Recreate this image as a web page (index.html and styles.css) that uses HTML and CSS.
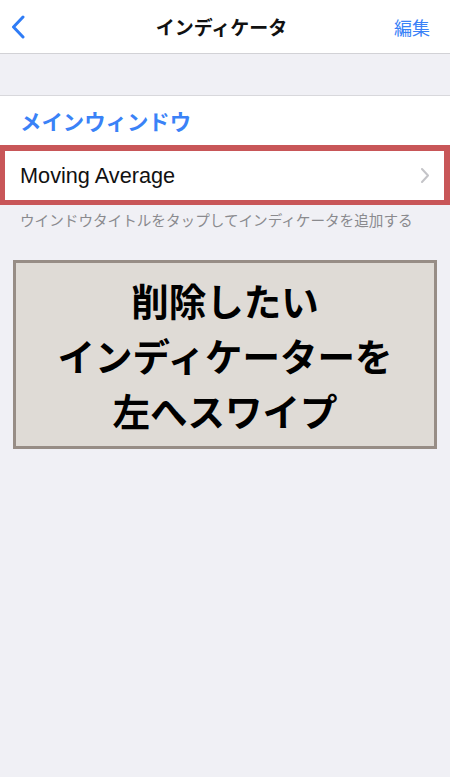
FILE: index.html
```html
<!DOCTYPE html>
<html lang="ja">

<head>
    <meta charset="UTF-8">
    <meta name="viewport" content="width=device-width, initial-scale=1.0">
    <title>インディケータ</title>
    <link rel="stylesheet" href="styles.css">
</head>

<body>
    <div class="nav">
        <svg class="back" width="14" height="24" viewBox="0 0 14 24">
            <path d="M12 2 L2.5 12 L12 22" fill="none" stroke="#2f7cf6" stroke-width="3" stroke-linecap="round" stroke-linejoin="round"/>
        </svg>
        <h1 class="title">インディケータ</h1>
        <span class="edit">編集</span>
    </div>
    <div class="spacer"></div>
    <div class="section">
        <div class="section-header">メインウィンドウ</div>
        <div class="row">
            <span class="row-label">Moving Average</span>
            <svg class="chevron" width="8" height="15" viewBox="0 0 8 15">
                <path d="M1 1 L7 7.5 L1 14" fill="none" stroke="#c4c4c8" stroke-width="2" stroke-linecap="round" stroke-linejoin="round"/>
            </svg>
        </div>
    </div>
    <p class="footer">ウインドウタイトルをタップしてインディケータを追加する</p>
    <div class="note">
        <p>削除したい<br>インディケーターを<br>左へスワイプ</p>
    </div>
</body>

</html>
```

FILE: styles.css
```css
body {
    font-family: "Noto Sans CJK JP", "Liberation Sans", sans-serif;
    background-color: #f0f0f5;
    margin: 0;
    padding: 0;
    width: 450px;
    height: 777px;
}

.nav {
    height: 53px;
    background-color: #fff;
    border-bottom: 1px solid #d2d2d6;
    display: flex;
    align-items: center;
    justify-content: space-between;
    padding: 0 20px 0 11px;
}

.back {
    display: block;
}

.title {
    margin: 0;
    font-size: 19px;
    font-weight: bold;
    color: #111;
    padding-left: 24px;
}

.edit {
    font-size: 18px;
    color: #3a82f7;
}

.spacer {
    height: 41px;
    border-bottom: 1px solid #d8d8dc;
}

.section {
    background-color: #fff;
}

.section-header {
    height: 49px;
    display: flex;
    align-items: center;
    padding-left: 20px;
    font-size: 21.4px;
    font-weight: bold;
    color: #3a82f7;
}

.row {
    height: 49px;
    border: 5px solid #c85658;
    border-top-width: 6px;
    border-right-width: 6px;
    display: flex;
    align-items: center;
    justify-content: space-between;
    padding: 0 15px;
}

.row-label {
    font-family: "Liberation Sans", "Noto Sans CJK JP", sans-serif;
    font-size: 21.7px;
    color: #111;
}

.chevron {
    display: block;
}

.footer {
    margin: 0;
    padding: 4px 20px 0;
    font-size: 14.6px;
    color: #8a8a8e;
    line-height: 22px;
    white-space: nowrap;
}

.note {
    margin: 29px 13px 0;
    height: 183px;
    border: 3px solid #978d86;
    background-color: #dfdbd6;
    display: flex;
    align-items: center;
    justify-content: center;
}

.note p {
    margin: 0;
    text-align: center;
    font-size: 37.5px;
    font-weight: bold;
    line-height: 55px;
    color: #000;
}
```
